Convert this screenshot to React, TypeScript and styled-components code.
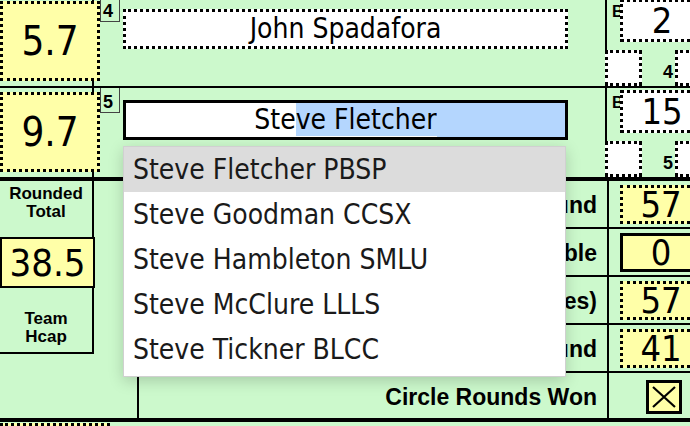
import React from 'react';
import styled, { createGlobalStyle } from 'styled-components';

const GREEN = '#ccf9cc';
const YELLOW = '#ffffa8';
const SANS = `"DejaVu Sans Condensed", "DejaVu Sans", sans-serif`;
const LABEL = `"Liberation Sans", Arial, sans-serif`;

const GlobalStyle = createGlobalStyle`
  html, body { margin: 0; padding: 0; background: ${GREEN}; overflow: hidden; }
  * { box-sizing: border-box; }
  body { font-family: ${SANS}; color: #000; }
`;

const Sheet = styled.div`
  width: 690px;
  height: 426px;
  overflow: hidden;
  background: ${GREEN};
`;

const Form = styled.div`
  width: 740px;
  display: flex;
  flex-direction: column;
  margin-top: -3px;
`;

/* ---------- player rows ---------- */

const PlayerRow = styled.div<{ $thick?: boolean }>`
  display: flex;
  height: ${(p) => (p.$thick ? 93 : 91)}px;
  border-bottom: ${(p) => (p.$thick ? 4 : 2)}px solid #000;
`;

const HcapCell = styled.div`
  flex: 0 0 94px;
  min-width: 0;
  border-right: 2px solid #000;
  padding-top: 4px;
`;

const HcapBox = styled.div`
  width: 100px;
  height: 80px;
  background: ${YELLOW};
  border: 3px dotted #000;
  display: flex;
  align-items: center;
  justify-content: center;
  font-size: 40px;
`;

const MidCell = styled.div`
  flex: 0 0 511px;
  min-width: 0;
  display: flex;
  align-items: flex-start;
`;

const NumTag = styled.div`
  flex: 0 0 20px;
  margin-left: 6px;
  height: 25px;
  border: 1px solid #444;
  border-top: none;
  font: bold 18px ${LABEL};
  padding: 5px 0 0 2px;
  line-height: 18px;
`;

const NameWrap = styled.div`
  position: relative;
  flex: 0 0 445px;
  margin-left: 3px;
  margin-top: 12px;
  height: 40px;
`;

const NameBox = styled.div<{ $active?: boolean }>`
  width: 100%;
  height: 100%;
  background: #fff;
  border: 3px ${(p) => (p.$active ? 'solid' : 'dotted')} #000;
  display: grid;
  grid-template-columns: 1fr auto 1fr;
  font-size: 28px;
  line-height: 34px;
  white-space: pre;
`;

const Selected = styled.span`
  background: #b4d6fe;
`;

const SelectedFill = styled.div`
  background: #b4d6fe;
`;

const Dropdown = styled.ul`
  position: absolute;
  top: calc(100% + 6px);
  left: 0;
  width: 443px;
  margin: 0;
  padding: 0 0 4px;
  list-style: none;
  background: #fff;
  border: 1px solid #d0d0d0;
  box-shadow: 0 4px 14px rgba(0, 0, 0, 0.18);
  z-index: 10;
`;

const Option = styled.li<{ $hover?: boolean }>`
  height: 45px;
  padding-left: 9px;
  display: flex;
  align-items: center;
  font-size: 28px;
  color: #1a1a1a;
  background: ${(p) => (p.$hover ? '#dcdcdc' : 'transparent')};
`;

const RightCell = styled.div`
  flex: 1;
  min-width: 0;
  border-left: 2px solid #000;
  display: flex;
  flex-direction: column;
`;

const RightTop = styled.div`
  display: flex;
  align-items: flex-start;
  padding-top: 2px;
`;

const CornerLetter = styled.div`
  flex: 0 0 13px;
  overflow: hidden;
  font: bold 16px ${LABEL};
  padding: 6px 0 0 5px;
  line-height: 14px;
`;

const ScoreBox = styled.div`
  flex: 0 0 84px;
  height: 43px;
  background: #fff;
  border: 3px dotted #000;
  display: flex;
  align-items: center;
  justify-content: center;
  font-size: 36px;
`;

const RightBottom = styled.div`
  margin-top: auto;
  display: flex;
  align-items: stretch;
  height: 36px;
`;

const SmallBox = styled.div<{ $w: number }>`
  flex: 0 0 ${(p) => p.$w}px;
  background: #fff;
  border: 3px dotted #000;
  margin-left: ${(p) => (p.$w < 40 ? -2 : 0)}px;
`;

const RoundTag = styled.div`
  flex: 0 0 33px;
  font: bold 18px ${LABEL};
  text-align: right;
  padding: 12px 2px 0 0;
`;

/* ---------- summary ---------- */

const Summary = styled.div`
  display: flex;
  border-bottom: 4px solid #000;
`;

const TotalsCol = styled.div`
  flex: 0 0 94px;
  min-width: 0;
`;

const TotalsCell = styled.div`
  height: 173px;
  border-right: 2px solid #000;
  border-bottom: 2px solid #000;
  display: flex;
  flex-direction: column;
  align-items: center;
  padding-top: 4px;
`;

const SmallLabel = styled.div<{ $gap?: number }>`
  font: bold 17px/18px ${LABEL};
  text-align: center;
  margin-top: ${(p) => p.$gap ?? 0}px;
  width: 90px;
`;

const TeamBox = styled.div`
  align-self: flex-start;
  flex: 0 0 51px;
  margin-top: 16px;
  width: 95px;
  background: ${YELLOW};
  border: 2px solid #000;
  display: flex;
  align-items: center;
  justify-content: center;
  font-size: 38px;
`;

const GapCol = styled.div`
  flex: 0 0 45px;
  border-right: 2px solid #000;
`;

const StatsGrid = styled.div`
  flex: 0 0 auto;
  display: grid;
  grid-template-columns: 468px 100px;
  grid-template-rows: 48px 48px 48px 48px 45px;
`;

const StatLabel = styled.div<{ $last?: boolean }>`
  border-bottom: ${(p) => (p.$last ? 0 : 2)}px solid #000;
  display: flex;
  align-items: center;
  justify-content: flex-end;
  padding: 3px 10px 0 0;
  font: bold 23px ${LABEL};
  white-space: nowrap;
  overflow: hidden;
`;

const StatValue = styled.div<{ $last?: boolean }>`
  border-bottom: ${(p) => (p.$last ? 0 : 2)}px solid #000;
  border-left: 2px solid #000;
  padding: ${(p) => (p.$last ? '7px 0 0 37px' : '4px 0 0 11px')};
`;

const StatBox = styled.div<{ $solid?: boolean }>`
  width: 82px;
  height: 39px;
  background: ${YELLOW};
  border: 3px ${(p) => (p.$solid ? 'solid' : 'dotted')} #000;
  display: flex;
  align-items: center;
  justify-content: center;
  font-size: 36px;
`;

const CheckBox = styled.div`
  width: 36px;
  height: 34px;
  background: ${YELLOW};
  border: 3px solid #000;
  padding: 3px;
  svg { display: block; }
`;

const NextRow = styled.div`
  padding-top: 1px;
  display: flex;
`;

const NextBox = styled.div`
  width: 110px;
  height: 60px;
  background: ${YELLOW};
  border: 3px dotted #000;
`;

/* ---------- data ---------- */

const options = [
  'Steve Fletcher PBSP',
  'Steve Goodman CCSX',
  'Steve Hambleton SMLU',
  'Steve McClure LLLS',
  'Steve Tickner BLCC',
];

const stats = [
  { label: 'Highest Round', value: '57' },
  { label: 'Handicap Applicable', value: '0', solid: true },
  { label: 'Total (Net Scores)', value: '57' },
  { label: 'Lowest Round', value: '41' },
];

export default function App() {
  return (
    <Sheet>
      <GlobalStyle />
      <Form>
        <PlayerRow>
          <HcapCell>
            <HcapBox>5.7</HcapBox>
          </HcapCell>
          <MidCell>
            <NumTag>4</NumTag>
            <NameWrap>
              <NameBox>
                <span />
                <span>John Spadafora</span>
                <span />
              </NameBox>
            </NameWrap>
          </MidCell>
          <RightCell>
            <RightTop>
              <CornerLetter>B</CornerLetter>
              <ScoreBox>2</ScoreBox>
            </RightTop>
            <RightBottom>
              <SmallBox $w={37} />
              <RoundTag>4</RoundTag>
              <SmallBox $w={50} />
            </RightBottom>
          </RightCell>
        </PlayerRow>

        <PlayerRow $thick>
          <HcapCell>
            <HcapBox>9.7</HcapBox>
          </HcapCell>
          <MidCell>
            <NumTag>5</NumTag>
            <NameWrap>
              <NameBox $active>
                <span />
                <span>
                  Ste<Selected>ve Fletcher</Selected>
                </span>
                <SelectedFill />
              </NameBox>
              <Dropdown>
                {options.map((o, i) => (
                  <Option key={o} $hover={i === 0}>
                    {o}
                  </Option>
                ))}
              </Dropdown>
            </NameWrap>
          </MidCell>
          <RightCell>
            <RightTop>
              <CornerLetter>B</CornerLetter>
              <ScoreBox>15</ScoreBox>
            </RightTop>
            <RightBottom>
              <SmallBox $w={37} />
              <RoundTag>5</RoundTag>
              <SmallBox $w={50} />
            </RightBottom>
          </RightCell>
        </PlayerRow>

        <Summary>
          <TotalsCol>
            <TotalsCell>
              <SmallLabel>
                Rounded
                <br />
                Total
              </SmallLabel>
              <TeamBox>38.5</TeamBox>
              <SmallLabel $gap={22}>
                Team
                <br />
                Hcap
              </SmallLabel>
            </TotalsCell>
          </TotalsCol>
          <GapCol />
          <StatsGrid>
            {stats.map((s) => (
              <React.Fragment key={s.label}>
                <StatLabel>{s.label}</StatLabel>
                <StatValue>
                  <StatBox $solid={s.solid}>{s.value}</StatBox>
                </StatValue>
              </React.Fragment>
            ))}
            <StatLabel $last>Circle Rounds Won</StatLabel>
            <StatValue $last>
              <CheckBox>
                <svg width="24" height="22" viewBox="0 0 24 22">
                  <path d="M1 1 L23 21 M23 1 L1 21" stroke="#000" strokeWidth="2.2" />
                </svg>
              </CheckBox>
            </StatValue>
          </StatsGrid>
        </Summary>
        <NextRow>
          <NextBox />
        </NextRow>
      </Form>
    </Sheet>
  );
}
